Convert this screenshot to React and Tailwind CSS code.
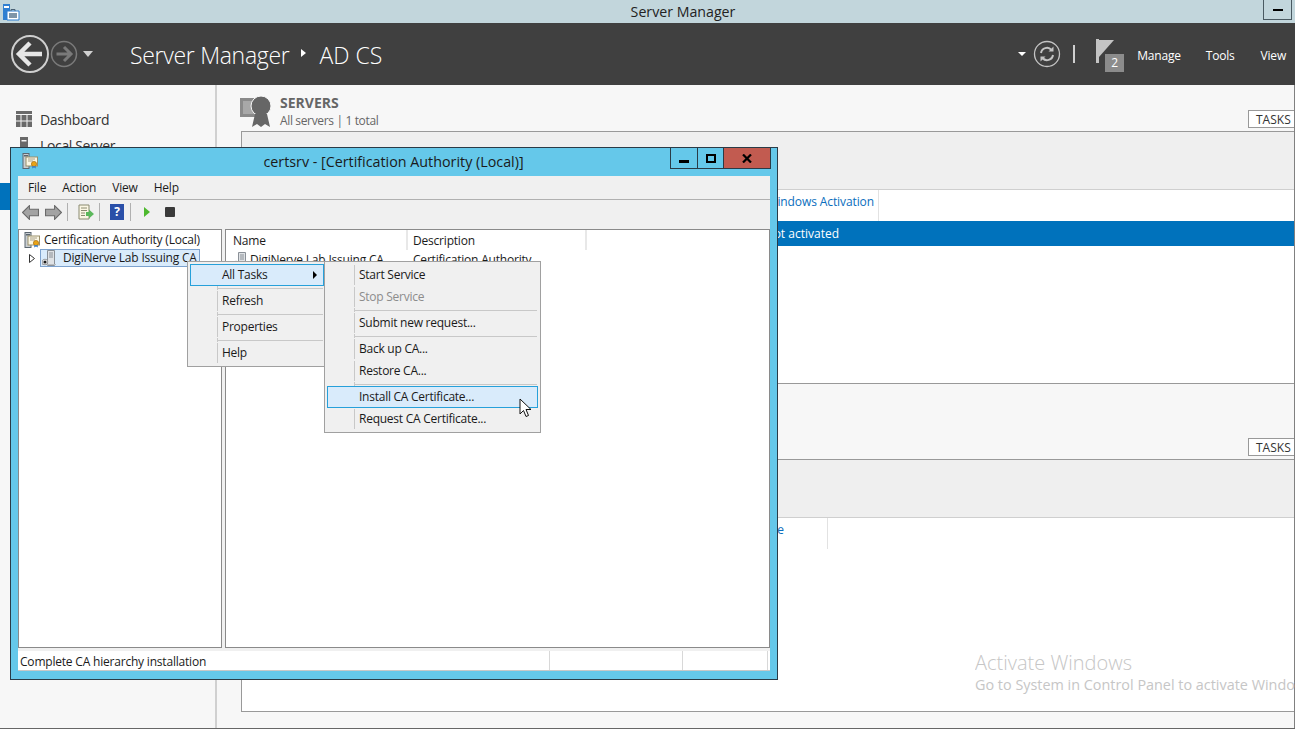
import React from 'react';

const CertIcon = ({ className }) => (
  <svg viewBox="0 0 16 16" className={className}>
    <rect x="1" y="0.5" width="6" height="15" fill="#c9ced2" stroke="#5b6670" />
    <rect x="2" y="2" width="4" height="1.5" fill="#5b6670" />
    <rect x="4" y="4" width="11.5" height="9" fill="#fbf7e4" stroke="#9a8f6a" />
    <path d="M6 6h7M6 8h5" stroke="#a8a08a" />
    <circle cx="12" cy="11" r="2.6" fill="#e8a317" stroke="#a86f10" strokeWidth="0.7" />
    <path d="M10.5 13l-.5 2.5 2-1 2 1-.5-2.5" fill="#3d7fc4" />
  </svg>
);

const ServerIcon = ({ className }) => (
  <svg viewBox="0 0 14 16" className={className}>
    <path d="M5.500 0.500h7v15h-7z" fill="#dfe2e5" stroke="#8a9097" />
    <path d="M7 3h4M7 5h4M7 7h4" stroke="#8a9097" />
    <path d="M0 14.500h14" stroke="#b8bcc0" />
    <circle cx="3" cy="12" r="2.800" fill="#fff" stroke="#777" strokeWidth="0.7" />
    <circle cx="3" cy="12" r="1.600" fill="#1c1c1c" />
  </svg>
);

const ArrowIcon = ({ flip }) => (
  <svg viewBox="0 0 16 14" className={`w-[17px] h-[15px] ${flip ? '-scale-x-100' : ''}`}>
    <path d="M0.500 7l6.500-6.500v3.500h8.500v6H7v3.500z" fill="#a3a3a3" stroke="#6a6a6a" />
  </svg>
);

const MenuItem = ({ label, active, disabled, arrow, gutter }) => (
  <div className={`flex h-[22px] items-center border ${active ? 'border-[#26a0da] bg-[#d9ebfb]' : 'border-transparent'}`}>
    <div className={`h-full ${gutter} ${active ? '' : 'border-r border-[#c8c8c8]'}`} />
    <span className={`pl-1 flex-1 ${disabled ? 'text-[#8c8c8c]' : 'text-[#1a1a1a]'}`}>{label}</span>
    {arrow && <span className="mr-[6px] w-0 h-0 border-y-[4px] border-l-[4px] border-y-transparent border-l-black" />}
  </div>
);

const MenuSeparator = ({ gutter }) => (
  <div className="flex h-1 items-center pl-px pr-px">
    <div className={`h-1 ${gutter} border-r border-[#c8c8c8]`} />
    <div className="flex-1 h-px bg-[#c8c8c8]" />
  </div>
);

const TasksButton = () => (
  <div className="h-[18px] w-[46px] border border-r-0 border-[#999] bg-white text-[12px] leading-[17px] pl-[7px] text-[#333]">TASKS</div>
);

const Panel = ({ tabWidth, tabRight, tabText, blueWidth, blueText, grow }) => (
  <div className={`ml-[24px] border-l border-t border-[#999] bg-white ${grow}`}>
    <div className="h-[58px] bg-[#efefef] border-b border-[#cfcfcf]" />
    <div className={`h-[31px] ${tabWidth} ${tabRight} border-r border-[#e2e2e2] text-right text-[12px] tracking-[-0.1px] leading-[24px] text-[#0a6ebd]`}>{tabText}</div>
    {blueText && (
      <div className="h-[25px] bg-[#0072bc] text-white text-[12px] leading-[25px]">
        <div className={`${blueWidth} text-right`}>{blueText}</div>
      </div>
    )}
  </div>
);

const App = () => {
  // the last two rows sit behind the certsrv window, only the blue strip shows
  const sideRows = [
    { label: 'Dashboard', h: 'h-[26px]' },
    { label: 'Local Server', h: 'h-[26px]', tower: true },
    { h: 'h-[24px]' },
    { h: 'h-[27px]', active: true },
  ];

  return (
    <div className="relative w-[1295px] h-[729px] overflow-hidden flex flex-col bg-[#f7f7f7] font-['Open_Sans',sans-serif] text-[#333]">
      {/* Server Manager title bar */}
      <div className="h-[23px] shrink-0 bg-[#c2d6dc] flex items-start relative">
        <svg viewBox="0 0 18 18" className="w-[18px] h-[18px] ml-[2px] mt-[3px]">
          <path d="M1 1h7v16H1z" fill="#2f7fd1" />
          <path d="M2 3h5v2H2z" fill="#fff" />
          <path d="M5 8h12v9H5z" fill="#fff" stroke="#2f7fd1" />
          <path d="M7 10h8v5H7z" fill="#7f95a8" />
          <path d="M9 8V6.500h4V8" fill="none" stroke="#4a6275" />
        </svg>
        <div className="flex-1 text-center text-[14.2px] leading-[24px] text-[#222] pl-[51px]">Server Manager</div>
        <div className="absolute right-[3px] top-0 w-[29px] h-[20px] border border-t-0 border-[#4a5a62] flex items-center justify-center">
          <div className="w-[10px] h-[2px] bg-black" />
        </div>
      </div>

      {/* dark header */}
      <div className="h-[62px] shrink-0 bg-[#404040] flex items-center text-white">
        <svg viewBox="0 0 40 40" className="ml-[10px] w-10 h-10">
          <circle cx="20" cy="20" r="18" fill="none" stroke="#cfcfcf" strokeWidth="2" />
          <path d="M9 20h23M20 9L9 20l11 11" fill="none" stroke="#e6e6e6" strokeWidth="4.500" />
        </svg>
        <svg viewBox="0 0 28 28" className="w-7 h-7">
          <circle cx="14" cy="14" r="12.500" fill="none" stroke="#7a7a7a" strokeWidth="1.500" />
          <path d="M6.500 14h14M14 7l7 7-7 7" fill="none" stroke="#7a7a7a" strokeWidth="3" />
        </svg>
        <div className="ml-[5px] w-0 h-0 border-x-[5px] border-t-[6px] border-x-transparent border-t-[#d0d0d0]" />
        <div className="ml-[37px] mt-[3px] text-[23px] tracking-[-0.3px] font-light leading-none">Server Manager</div>
        <div className="ml-[12px] w-0 h-0 border-y-[4px] border-l-[5px] border-y-transparent border-l-white -mt-[3px]" />
        <div className="ml-[13px] mt-[3px] text-[23px] font-light leading-none">AD CS</div>
        <div className="flex-1" />
        <div className="w-0 h-0 border-x-[4px] border-t-[4px] border-x-transparent border-t-white mr-[7px]" />
        <svg viewBox="0 0 28 28" className="w-[28px] h-[28px]">
          <circle cx="14" cy="14" r="12.500" fill="none" stroke="#c4c4c4" strokeWidth="1.300" />
          <path d="M8 13a6 6 0 0 1 10.500-3M20 15a6 6 0 0 1-10.500 3" fill="none" stroke="#c4c4c4" strokeWidth="2" />
          <path d="M20.500 6.500v5h-5zM7.500 21.500v-5h5z" fill="#c4c4c4" />
        </svg>
        <div className="ml-[12px] w-[2px] h-[18px] bg-[#cfcfcf]" />
        <div className="relative ml-[21px] w-[30px] h-[34px] mt-[4px]">
          <svg viewBox="0 0 18 24" className="w-[18px] h-[24px]">
            <path d="M0 0h3v24H0z" fill="#c4c4c4" />
            <path d="M3 1h15L3 18z" fill="#c4c4c4" />
          </svg>
          <div className="absolute left-[9px] top-[15px] w-[19px] h-[18px] bg-[#8c8c8c] text-center text-[12px] leading-[18px] text-white">2</div>
        </div>
        <div className="ml-[11px] mt-[3px] text-[12px] tracking-[-0.2px]">Manage</div>
        <div className="ml-[25px] mt-[3px] text-[12px] tracking-[-0.2px]">Tools</div>
        <div className="ml-[26px] mr-[9px] mt-[3px] text-[12px] tracking-[-0.2px]">View</div>
      </div>

      {/* page body */}
      <div className="flex-1 flex min-h-0 border-r border-[#808080]">
        <div className="w-[217px] shrink-0 border-r-2 border-[#d0d0d0] pt-[22px] text-[14px] tracking-[-0.35px]">
          {sideRows.map((row, i) => (
            <div key={i} className={`${row.h} flex items-center pl-[16px] ${row.active ? 'bg-[#0072bc] text-white' : 'pb-[2px]'}`}>
              {row.label && (
                <svg viewBox="0 0 16 16" className="w-4 h-4 mr-2 fill-[#6a6a6a]">
                  {row.tower
                    ? <path d="M4 0h8v16H4zM5.500 3v1.500h5V3z" fillRule="evenodd" />
                    : <path d="M0 0h16v3H0zM0 4h4.500v5.500H0zM5.500 4h5v5.500h-5zM11.500 4H16v5.500h-4.500zM0 10.500h4.500V16H0zM5.500 10.500h5V16h-5zM11.500 10.500H16V16h-4.500z" />}
                </svg>
              )}
              {row.label}
            </div>
          ))}
        </div>

        <div className="flex-1 flex flex-col min-w-0">
          <div className="h-[46px] shrink-0 flex pl-[23px]">
            <svg viewBox="0 0 32 32" className="w-8 h-8 mt-[10px]">
              <path d="M0 3h20v19H0z" fill="#8a8a8a" />
              <path d="M3 6h14v13H3z" fill="#a8a8a8" />
              <circle cx="21" cy="11" r="10" fill="#666" stroke="#f7f7f7" />
              <path d="M15 19l-3 13 5-3 4 3 4-3 5 3-3-13z" fill="#666" />
            </svg>
            <div className="ml-[8px] mt-[9px]">
              <div className="text-[14px] font-bold leading-[18px] text-[#666]">SERVERS</div>
              <div className="text-[12px] tracking-[-0.35px] leading-[18px] text-[#666]">All servers | 1 total</div>
            </div>
            <div className="flex-1" />
            <div className="mt-[25px]"><TasksButton /></div>
          </div>
          <Panel
            grow="h-[252px] shrink-0"
            tabWidth="w-[637px]"
            tabRight="pr-[4px]"
            tabText="Windows Activation"
            blueWidth="w-[597px]"
            blueText="Not activated"
          />
          <div className="ml-[24px] h-[76px] shrink-0 border-t border-[#999] flex justify-end items-end pb-[3px]">
            <TasksButton />
          </div>
          <Panel
            grow="flex-1 border-b"
            tabWidth="w-[586px]"
            tabRight="pr-[43px]"
            tabText="Server Name"
          />
          <div className="h-[16px] shrink-0" />
        </div>
      </div>
      <div className="h-px shrink-0 bg-[#666]" />

      {/* activation watermark */}
      <div className="absolute left-[975px] top-[649px] w-[320px] overflow-hidden whitespace-nowrap text-[#c6c6c6]">
        <div className="text-[20px] leading-[27px] font-light">Activate Windows</div>
        <div className="text-[14.4px] leading-[18px]">Go to System in Control Panel to activate Windows.</div>
      </div>

      {/* certsrv window */}
      <div className="absolute left-[10px] top-[147px] w-[768px] h-[533px] border border-[#2a3b47] bg-[#65c8ea] flex flex-col text-[#1a1a1a] text-[12px] tracking-[-0.2px]">
        <div className="h-[28px] shrink-0 relative flex">
          <CertIcon className="w-[16px] h-[16px] ml-[11px] mt-[5px]" />
          <div className="flex-1 text-center text-[14.3px] tracking-normal leading-[27px] pr-[28px] text-[#1a1a1a]">certsrv - [Certification Authority (Local)]</div>
          <div className="absolute right-[6px] top-0 h-[21px] flex border border-t-0 border-[#2a3b47]">
            <div className="w-[27px] border-r border-[#2a3b47] flex items-end justify-center pb-[5px]">
              <div className="w-[10px] h-[3px] bg-black" />
            </div>
            <div className="w-[26px] border-r border-[#2a3b47] flex items-center justify-center">
              <div className="w-[10px] h-[9px] border-2 border-black" />
            </div>
            <div className="w-[46px] bg-[#c25b50] flex items-center justify-center">
              <svg viewBox="0 0 10 9" className="w-[10px] h-[9px]">
                <path d="M1 0.500l8 8M9 0.500l-8 8" stroke="#000" strokeWidth="2.200" />
              </svg>
            </div>
          </div>
        </div>

        <div className="flex-1 mx-[7px] flex flex-col min-h-0">
          <div className="h-[24px] shrink-0 bg-[#f0f0f0] border-b border-[#b0b0b0] flex items-center">
            <span className="ml-[10px]">File</span>
            <span className="ml-[16px]">Action</span>
            <span className="ml-[16px]">View</span>
            <span className="ml-[16px]">Help</span>
          </div>
          <div className="h-[29px] shrink-0 bg-[#f0f0f0] flex items-center pl-[4px] pb-[5px]">
            <ArrowIcon />
            <div className="w-[6px]" />
            <ArrowIcon flip />
            <div className="ml-[5px] w-px h-[18px] bg-[#b0b0b0]" />
            <svg viewBox="0 0 16 16" className="ml-[10px] w-4 h-4">
              <path d="M1 1h10v14H1z" fill="#fbf7e4" stroke="#8a8a70" />
              <path d="M3 4h6M3 6.500h6M3 9h4M3 11.500h4" stroke="#8a8a70" />
              <path d="M8 8h3V5.500l5 4.500-5 4.500V12H8z" fill="#5cb85c" />
            </svg>
            <div className="ml-[5px] w-px h-[18px] bg-[#b0b0b0]" />
            <div className="ml-[10px] w-[14px] h-[16px] bg-[#2a4fa8] text-center text-white text-[12px] font-bold leading-[16px]">?</div>
            <div className="ml-[6px] w-px h-[18px] bg-[#b0b0b0]" />
            <div className="ml-[13px] w-0 h-0 border-y-[5px] border-l-[6px] border-y-transparent border-l-[#4db82e]" />
            <div className="ml-[15px] w-[10px] h-[10px] rounded-[1px] bg-[#3a3a3a]" />
          </div>

          <div className="flex-1 flex gap-[3px] min-h-0 bg-[#f0f0f0]">
            <div className="w-[204px] border border-[#8a8a8a] bg-white">
              <div className="h-[19px] flex items-center pl-[5px]">
                <CertIcon className="w-4 h-4" />
                <span className="ml-[4px]">Certification Authority (Local)</span>
              </div>
              <div className="flex items-center h-[18px]">
                <svg viewBox="0 0 6 9" className="ml-[10px] w-[6px] h-[9px]">
                  <path d="M0.500 0.500l5 4-5 4z" fill="#fff" stroke="#333" />
                </svg>
                <div className="ml-[5px] w-[160px] h-[18px] bg-[#d9ebfb] border border-[#7da2ce] flex items-center pl-[1px]">
                  <ServerIcon className="w-[14px] h-[16px]" />
                  <span className="ml-[7px] whitespace-nowrap">DigiNerve Lab Issuing CA</span>
                </div>
              </div>
            </div>
            <div className="flex-1 border border-[#8a8a8a] bg-white">
              <div className="h-[20px] ml-[1px] flex items-center">
                <div className="w-[181px] h-full border-r-2 border-[#e8e8e8] pl-[6px] leading-[22px]">Name</div>
                <div className="w-[179px] h-full border-r-2 border-[#e8e8e8] pl-[5px] leading-[22px]">Description</div>
              </div>
              <div className="h-[20px] ml-[1px] flex items-center">
                <div className="w-[181px] pl-[6px] flex items-center whitespace-nowrap">
                  <ServerIcon className="w-[14px] h-[16px]" />
                  <span className="ml-[3px]">DigiNerve Lab Issuing CA</span>
                </div>
                <div className="pl-[5px] whitespace-nowrap">Certification Authority</div>
              </div>
            </div>
          </div>

          <div className="h-[23px] shrink-0 pt-[3px] bg-[#f0f0f0]">
            <div className="h-[20px] bg-white flex border-b border-[#c8c8c8] leading-[21px]">
              <div className="w-[532px] pl-[2px] border-r border-[#d8d8d8]">Complete CA hierarchy installation</div>
              <div className="w-[133px] border-r border-[#d8d8d8]" />
              <div className="w-[85px] border-r border-[#d8d8d8]" />
            </div>
          </div>
        </div>
        <div className="h-[8px] shrink-0" />
      </div>

      {/* context menu */}
      <div className="absolute left-[187px] top-[261px] w-[140px] border border-[#a0a0a0] bg-[#f0f0f0] p-[2px] text-[12px] tracking-[-0.25px]">
        <MenuItem label="All Tasks" active arrow gutter="w-[27px]" />
        <MenuSeparator gutter="w-[27px]" />
        <MenuItem label="Refresh" gutter="w-[27px]" />
        <MenuSeparator gutter="w-[27px]" />
        <MenuItem label="Properties" gutter="w-[27px]" />
        <MenuSeparator gutter="w-[27px]" />
        <MenuItem label="Help" gutter="w-[27px]" />
      </div>

      {/* All Tasks submenu */}
      <div className="absolute left-[324px] top-[261px] w-[217px] border border-[#a0a0a0] bg-[#f0f0f0] p-[2px] text-[12px] tracking-[-0.25px]">
        <MenuItem label="Start Service" gutter="w-[27px]" />
        <MenuItem label="Stop Service" disabled gutter="w-[27px]" />
        <MenuSeparator gutter="w-[27px]" />
        <MenuItem label="Submit new request..." gutter="w-[27px]" />
        <MenuSeparator gutter="w-[27px]" />
        <MenuItem label="Back up CA..." gutter="w-[27px]" />
        <MenuItem label="Restore CA..." gutter="w-[27px]" />
        <MenuSeparator gutter="w-[27px]" />
        <MenuItem label="Install CA Certificate..." active gutter="w-[27px]" />
        <MenuItem label="Request CA Certificate..." gutter="w-[27px]" />
      </div>

      {/* mouse pointer */}
      <svg viewBox="0 0 14 20" className="absolute left-[519px] top-[398px] w-[14px] h-[20px]">
        <path d="M1 1v15l3.500-3.500 2.500 6 2.500-1-2.500-6H12z" fill="#fff" stroke="#111" strokeWidth="1" />
      </svg>
    </div>
  );
};

export default App;
